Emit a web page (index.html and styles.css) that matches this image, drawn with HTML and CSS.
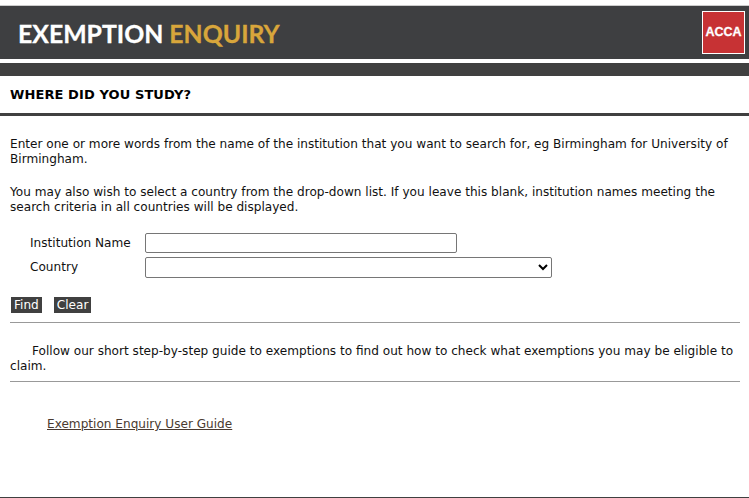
FILE: index.html
```html
<!DOCTYPE html>
<html lang="en">
  <head>
    <meta charset="utf-8" />
    <title>Exemption Enquiry</title>
    <link rel="stylesheet" href="styles.css">
  </head>
  <body>
    <div class="banner">
      <div class="brand">EXEMPTION <span class="brand-gold">ENQUIRY</span></div>
      <div class="logo">ACCA</div>
    </div>
    <div class="strip"></div>
    <h1 class="title">WHERE DID YOU STUDY?</h1>
    <div class="content">
      <p class="intro">Enter one or more words from the name of the institution that you want to search for, eg Birmingham for University of Birmingham.</p>
      <p class="intro">You may also wish to select a country from the drop-down list. If you leave this blank, institution names meeting the search criteria in all countries will be displayed.</p>
      <form class="search">
        <div class="field">
          <label for="institution">Institution Name</label>
          <input type="text" id="institution" class="text-input" />
        </div>
        <div class="field">
          <label for="country">Country</label>
          <select id="country" class="select-input"><option></option></select>
        </div>
        <div class="actions">
          <button type="button" class="btn">Find</button>
          <button type="button" class="btn">Clear</button>
        </div>
      </form>
      <hr class="rule" />
      <p class="guide">Follow our short step-by-step guide to exemptions to find out how to check what exemptions you may be eligible to claim.</p>
      <hr class="rule" />
      <a class="guide-link" href="#">Exemption Enquiry User Guide</a>
    </div>
    <div class="page-end"></div>
  </body>
</html>
```

FILE: styles.css
```css
html,
body {
  height: 498px;
  overflow: hidden;
}

body {
  margin: 0;
  background: #fff;
  color: #111;
  font-family: "DejaVu Sans", Verdana, sans-serif;
  font-size: 12.1px;
  line-height: 15px;
  display: flex;
  flex-direction: column;
}

.banner {
  margin-top: 5px;
  border-top: 1px solid #ccc;
  height: 53px;
  background: #3e3f41;
  display: flex;
  justify-content: space-between;
  align-items: center;
  padding: 0 4px 0 18px;
}

.brand {
  color: #fff;
  font-family: Lato, sans-serif;
  font-size: 24.8px;
  font-weight: 700;
  line-height: 30px;
  margin-top: 2px;
  -webkit-text-stroke: 0.3px;
}

.brand-gold {
  color: #d8a63b;
}

.logo {
  width: 41px;
  height: 41px;
  border: 1px solid #fff;
  background: #c73234;
  color: #fff;
  font-family: "Liberation Sans", sans-serif;
  font-size: 12.5px;
  font-weight: 700;
  line-height: 41px;
  text-align: center;
  -webkit-text-stroke: 0.3px #fff;
}

.strip {
  margin-top: 4px;
  height: 13px;
  background: #404040;
}

.title {
  margin: 0;
  height: 37px;
  border-bottom: 3px solid #404040;
  padding-left: 10px;
  color: #000;
  font-size: 13px;
  font-weight: 700;
  letter-spacing: 0.1px;
  line-height: 37px;
}

.content {
  flex: 1;
  padding: 0 9px 0 10px;
}

.intro {
  margin: 21px 0 0;
}

.intro + .intro {
  margin-top: 18px;
}

.search {
  margin-top: 18px;
}

.field {
  display: flex;
  align-items: center;
  margin-bottom: 4px;
  padding-left: 20px;
}

.field label {
  width: 115px;
}

.text-input {
  box-sizing: border-box;
  width: 312px;
  height: 20px;
  margin: 0;
  border: 1px solid #767676;
  border-radius: 2px;
  padding: 1px 2px;
}

.select-input {
  box-sizing: border-box;
  width: 407px;
  height: 21px;
  margin: 0;
  border: 1px solid #767676;
  border-radius: 2px;
  background: #fff;
}

.actions {
  display: flex;
  gap: 12px;
  margin-top: 19px;
  padding-left: 1px;
}

.btn {
  border: 0;
  background: #404040;
  color: #fff;
  font-family: inherit;
  font-size: 12.1px;
  line-height: 16px;
  padding: 0 3px;
}

.rule {
  margin: 9px 0 0;
  border: 0;
  height: 1px;
  background: #999;
}

.guide {
  margin: 21px 0 7px;
  text-indent: 22px;
}

.guide + .rule {
  margin-top: 0;
}

.guide-link {
  display: inline-block;
  margin: 35px 0 0 37px;
  color: #4a3a30;
}

.page-end {
  height: 1px;
  background: #404040;
}
```
